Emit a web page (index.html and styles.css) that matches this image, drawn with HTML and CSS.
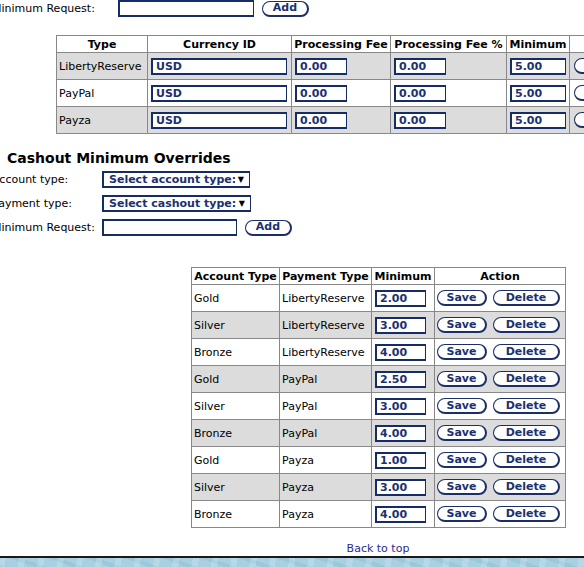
FILE: index.html
```html
<!DOCTYPE html>
<html lang="en">
<head>
  <meta charset="UTF-8" />
  <title>Cashout Settings</title>
  <link rel="stylesheet" href="styles.css">
</head>
<body>
  <div class="page">
    <!-- new cashout type -->
    <div class="top-request">
      <label for="minTop">Minimum Request:</label>
      <input type="text" id="minTop" class="field w-request" />
      <button class="pill btn-add">Add</button>
    </div>

    <table class="grid fees">
      <colgroup>
        <col style="width:91px"><col style="width:144px"><col style="width:99px">
        <col style="width:116px"><col style="width:63px"><col style="width:140px">
      </colgroup>
      <thead>
        <tr>
          <th>Type</th>
          <th>Currency ID</th>
          <th>Processing Fee</th>
          <th>Processing Fee %</th>
          <th>Minimum</th>
          <th>Action</th>
        </tr>
      </thead>
      <tbody>
        <tr class="alt">
          <td>LibertyReserve</td>
          <td><input class="field w-cur" value="USD"></td>
          <td><input class="field w-fee" value="0.00"></td>
          <td><input class="field w-fee" value="0.00"></td>
          <td><input class="field w-min" value="5.00"></td>
          <td class="actions"><button class="pill btn-save wide">Save</button><button class="pill btn-del">Delete</button></td>
        </tr>
        <tr>
          <td>PayPal</td>
          <td><input class="field w-cur" value="USD"></td>
          <td><input class="field w-fee" value="0.00"></td>
          <td><input class="field w-fee" value="0.00"></td>
          <td><input class="field w-min" value="5.00"></td>
          <td class="actions"><button class="pill btn-save wide">Save</button><button class="pill btn-del">Delete</button></td>
        </tr>
        <tr class="alt">
          <td>Payza</td>
          <td><input class="field w-cur" value="USD"></td>
          <td><input class="field w-fee" value="0.00"></td>
          <td><input class="field w-fee" value="0.00"></td>
          <td><input class="field w-min" value="5.00"></td>
          <td class="actions"><button class="pill btn-save wide">Save</button><button class="pill btn-del">Delete</button></td>
        </tr>
      </tbody>
    </table>

    <h2>Cashout Minimum Overrides</h2>
    <div class="override-form">
      <label>Account type:</label>
      <span class="select-box w-sel1">
        <select><option>Select account type:</option></select><span class="arrow">&#9660;</span>
      </span>
      <label>Payment type:</label>
      <span class="select-box w-sel2">
        <select><option>Select cashout type:</option></select><span class="arrow">&#9660;</span>
      </span>
      <label for="minOverride">Minimum Request:</label>
      <span class="request-cell">
        <input type="text" id="minOverride" class="field w-request2" />
        <button class="pill btn-add">Add</button>
      </span>
    </div>

    <table class="grid overrides">
      <colgroup>
        <col style="width:88px"><col style="width:92px"><col style="width:63px"><col style="width:131px">
      </colgroup>
      <thead>
        <tr>
          <th>Account Type</th>
          <th>Payment Type</th>
          <th>Minimum</th>
          <th>Action</th>
        </tr>
      </thead>
      <tbody id="overrideRows"></tbody>
    </table>

    <div class="back"><a href="#">Back to top</a></div>
  </div>
  <div class="footer"></div>

  <script>
    const overrides = [
      ['Gold', 'LibertyReserve', '2.00'],
      ['Silver', 'LibertyReserve', '3.00'],
      ['Bronze', 'LibertyReserve', '4.00'],
      ['Gold', 'PayPal', '2.50'],
      ['Silver', 'PayPal', '3.00'],
      ['Bronze', 'PayPal', '4.00'],
      ['Gold', 'Payza', '1.00'],
      ['Silver', 'Payza', '3.00'],
      ['Bronze', 'Payza', '4.00']
    ];

    const tbody = document.getElementById('overrideRows');
    overrides.forEach((row, i) => {
      const tr = document.createElement('tr');
      if (i % 2 === 1) tr.className = 'alt';
      tr.innerHTML = `
        <td>${row[0]}</td>
        <td>${row[1]}</td>
        <td><input class="field w-min2" value="${row[2]}"></td>
        <td class="actions"><button class="pill btn-save">Save</button><button class="pill btn-del">Delete</button></td>
      `;
      tbody.appendChild(tr);
    });
  </script>
</body>
</html>
```

FILE: styles.css
```css
* {
  box-sizing: border-box;
}
html, body {
  margin: 0;
  padding: 0;
  overflow: hidden;
  background: #fff;
}
body {
  font-family: "DejaVu Sans", Verdana, sans-serif;
  font-size: 11px;
  color: #000;
}
.page {
  margin-left: -8px;
  width: 772px;
}
.top-request {
  display: flex;
  align-items: center;
  height: 17px;
}
.top-request label {
  width: 126px;
}
.field {
  height: 17px;
  border-style: solid;
  border-color: #162c66;
  border-width: 2px 1px 2px 2px;
  padding: 0 3px;
  font-family: inherit;
  font-size: 11px;
  font-weight: bold;
  color: #1b3170;
  background: #fff;
  outline: none;
}
.w-request { width: 136px; }
.w-request2 { width: 135px; }
.w-cur { width: 136px; }
.w-fee { width: 52px; }
.w-min { width: 56px; }
.w-min2 { width: 51px; }
.pill {
  height: 16px;
  padding: 0;
  background: #fff;
  border: 1px solid #1b2f66;
  border-right-width: 2px;
  border-bottom-width: 2px;
  border-radius: 8px;
  font-family: inherit;
  font-size: 11px;
  font-weight: bold;
  color: #1b3170;
  line-height: 12px;
  cursor: pointer;
}
.btn-add { width: 47px; margin-left: 8px; }
.btn-save { width: 50px; }
.btn-save.wide { width: 64px; }
.btn-del { width: 67px; margin-left: 6px; }
.grid {
  border-collapse: collapse;
  table-layout: fixed;
  border: 1px solid #444;
  background: #fff;
}
.grid th, .grid td {
  border: 1px solid #888;
  padding: 0 2px;
  text-align: left;
  white-space: nowrap;
  overflow: hidden;
}
.grid th {
  height: 17px;
  font-weight: bold;
  text-align: center;
}
.grid td {
  height: 27px;
}
.grid tr.alt td {
  background: #dcdcdc;
}
.grid td .field {
  display: block;
  margin-left: 1px;
}
.actions {
  text-align: center;
}
.fees .actions {
  text-align: left;
  padding-left: 4px;
}
.actions .pill {
  vertical-align: middle;
}
.fees {
  margin-left: 64px;
  margin-top: 18px;
}
h2 {
  font-size: 14px;
  line-height: 17px;
  margin: 16px 0 4px 15px;
}
.override-form {
  display: grid;
  grid-template-columns: 110px auto;
  row-gap: 7px;
  align-items: center;
  justify-items: start;
}
.select-box {
  display: inline-flex;
  align-items: center;
  height: 17px;
  border: 2px solid #162c66;
  border-right-width: 1px;
  background: #fff;
  overflow: hidden;
}
.w-sel1 { width: 148px; }
.w-sel2 { width: 149px; }
.select-box select {
  appearance: none;
  -webkit-appearance: none;
  border: none;
  background: transparent;
  padding: 0 0 0 5px;
  height: 14px;
  flex: 1;
  min-width: 0;
  font-family: inherit;
  font-size: 11px;
  font-weight: bold;
  color: #1b3170;
  outline: none;
}
.select-box .arrow {
  font-size: 8px;
  color: #000;
  padding: 0 5px 0 3px;
}
.request-cell {
  display: flex;
  align-items: center;
}
.overrides {
  margin-left: 199px;
  margin-top: 31px;
}
.back {
  text-align: center;
  margin-top: 14px;
  line-height: 14px;
}
.back a {
  color: #2a2a96;
  text-decoration: none;
}
.footer {
  margin-top: 0;
  height: 40px;
  border-top: 2px solid #1a1a1a;
  background-color: #a8d0e2;
  background-image:
    repeating-linear-gradient(100deg, rgba(255,255,255,0.18) 0 6px, rgba(0,0,0,0) 6px 19px),
    repeating-linear-gradient(20deg, rgba(90,150,180,0.15) 0 4px, rgba(0,0,0,0) 4px 13px);
}
```
